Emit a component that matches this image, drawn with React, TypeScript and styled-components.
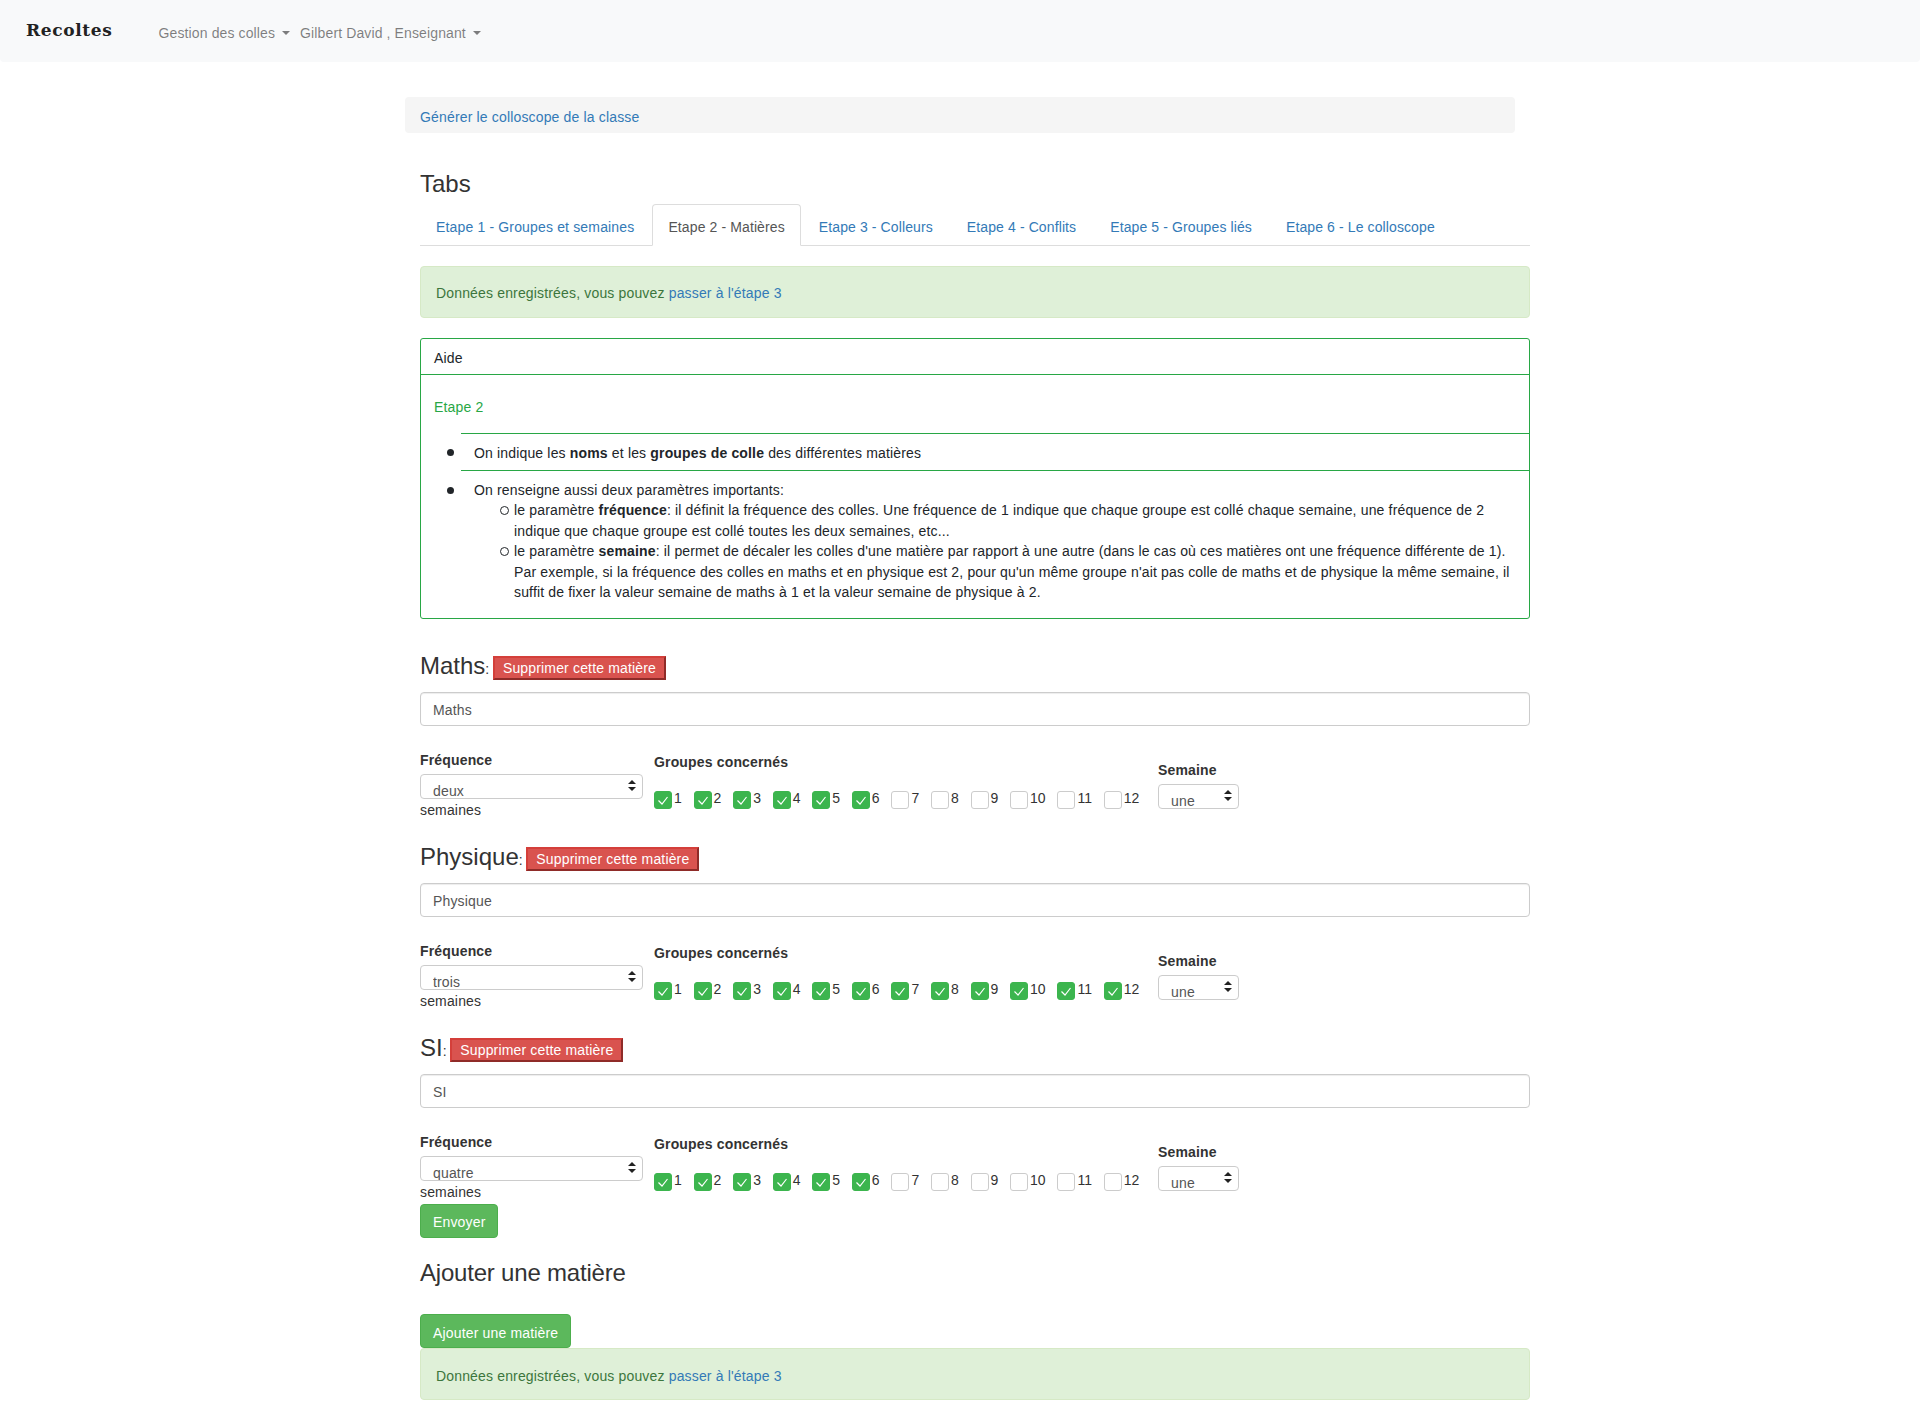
import styled, { createGlobalStyle } from "styled-components";

const GlobalStyle = createGlobalStyle`
  html, body {
    margin: 0;
    padding: 0;
    background: #fff;
  }
  body {
    font-family: "Liberation Sans", Arial, sans-serif;
    font-size: 14px;
    line-height: 20px;
    letter-spacing: 0.16px;
    color: #333;
  }
  * {
    box-sizing: border-box;
  }
`;

const Navbar = styled.nav`
  display: flex;
  align-items: center;
  height: 62px;
  padding: 0 26px;
  background: #f8f9fa;
  border-radius: 0 0 4px 4px;
`;

const Brand = styled.a`
  font-family: "DejaVu Serif", serif;
  font-weight: 700;
  font-size: 17px;
  letter-spacing: 0.65px;
  color: #222;
  margin-right: 46px;
  margin-top: -2px;
`;

const NavLink = styled.a`
  display: flex;
  align-items: center;
  color: rgba(0, 0, 0, 0.5);
  letter-spacing: 0.12px;
  margin-right: 10px;
  margin-top: 4px;
  &::after {
    content: "";
    margin-left: 7px;
    border-top: 4px solid rgba(0, 0, 0, 0.5);
    border-left: 4px solid transparent;
    border-right: 4px solid transparent;
  }
`;

const Page = styled.main`
  width: 1140px;
  margin: 0 auto;
  padding: 35px 0 0 15px;
`;

const Breadcrumb = styled.div`
  width: 1110px;
  height: 36px;
  padding: 10px 15px 6px;
  background: #f5f5f5;
  border-radius: 4px;
`;

const Link = styled.a`
  color: #337ab7;
`;

const Content = styled.div`
  width: 1110px;
  margin-left: 15px;
`;

const Heading = styled.h3`
  margin: 0;
  font-size: 24px;
  line-height: 26px;
  font-weight: 500;
  letter-spacing: 0;
  color: #333;
`;

const TabsHeading = styled(Heading)`
  margin: 38px 0 7px;
`;

const Tabs = styled.ul`
  display: flex;
  height: 42px;
  margin: 0 0 20px;
  padding: 0;
  list-style: none;
  border-bottom: 1px solid #ddd;
`;

const Tab = styled.li<{ $active?: boolean }>`
  height: 42px;
  margin-right: 2px;
  padding: 12px 15px 8px;
  border: 1px solid ${(p) => (p.$active ? "#ddd" : "transparent")};
  border-bottom-color: ${(p) => (p.$active ? "#fff" : "transparent")};
  border-radius: 4px 4px 0 0;
  background: ${(p) => (p.$active ? "#fff" : "transparent")};
  color: ${(p) => (p.$active ? "#555" : "#337ab7")};
  letter-spacing: 0.11px;
  &:first-child {
    letter-spacing: 0.16px;
  }
`;

const Alert = styled.div`
  height: 52px;
  padding: 16px 15px 14px;
  background: #dff0d8;
  border: 1px solid #d6e9c6;
  border-radius: 4px;
  color: #3c763d;
`;

const AlertTop = styled(Alert)`
  margin-bottom: 20px;
`;

const AlertBottom = styled(Alert)`
  margin-bottom: 20px;
  padding: 17px 15px 13px;
`;

const HelpCard = styled.section`
  margin-bottom: 34px;
  border: 1px solid #28a745;
  border-radius: 3px;
`;

const HelpHeader = styled.div`
  padding: 9px 13px 6px;
  height: 36px;
  border-bottom: 1px solid #28a745;
  color: #212529;
`;

const HelpBody = styled.div`
  padding: 22px 0 15px 13px;
  color: #212529;
`;

const HelpTitle = styled.p`
  margin: 0 0 16px;
  color: #28a745;
`;

const HelpList = styled.ul`
  margin: 0;
  padding: 0 0 0 27px;
  list-style: none;
`;

const HelpItem = styled.li<{ $ruled?: boolean }>`
  position: relative;
  padding: ${(p) => (p.$ruled ? "9px 13px 7px" : "9px 13px 0")};
  border-top: ${(p) => (p.$ruled ? "1px solid #28a745" : "0")};
  border-bottom: ${(p) => (p.$ruled ? "1px solid #28a745" : "0")};
  &::before {
    content: "";
    position: absolute;
    left: -14px;
    top: ${(p) => (p.$ruled ? "15px" : "16px")};
    width: 7px;
    height: 7px;
    border-radius: 50%;
    background: #212529;
  }
`;

const SubList = styled.ul`
  margin: 0;
  padding: 0 0 0 40px;
  list-style: none;
`;

const SubItem = styled.li`
  position: relative;
  line-height: 20.5px;
  &::before {
    content: "";
    position: absolute;
    left: -14px;
    top: 6px;
    width: 7px;
    height: 7px;
    border: 1px solid #212529;
    border-radius: 50%;
  }
`;

const Subjects = styled.div`
  display: flex;
  flex-direction: column;
  gap: 24px;
`;

const SubjectTitle = styled.div`
  display: flex;
  align-items: flex-start;
  height: 28px;
  margin-bottom: 11px;
`;

const Colon = styled.span`
  margin: 6px 3.5px 0 0;
`;

const DeleteButton = styled.button`
  height: 24px;
  margin-top: 3px;
  padding: 0 8px;
  background: #d9534f;
  border: 2px solid;
  border-color: #d43f3a #8f2b28 #8f2b28 #d43f3a;
  color: #fff;
  font: inherit;
  letter-spacing: inherit;
  cursor: pointer;
`;

const NameInput = styled.input`
  display: block;
  width: 100%;
  height: 34px;
  margin-bottom: 24px;
  padding: 7px 12px 5px;
  border: 1px solid #ccc;
  border-radius: 4px;
  box-shadow: inset 0 1px 1px rgba(0, 0, 0, 0.075);
  color: #555;
  font: inherit;
  letter-spacing: inherit;
`;

const Settings = styled.div`
  display: flex;
  align-items: center;
`;

const FrequencyCol = styled.div`
  width: 223px;
  margin-right: 11px;
`;

const GroupsCol = styled.div`
  width: 493px;
  margin-right: 11px;
  padding-bottom: 9px;
`;

const FieldLabel = styled.div`
  font-weight: 700;
`;

const SelectBox = styled.div`
  position: relative;
  height: 25px;
  margin-top: 4px;
  svg {
    position: absolute;
    right: 7px;
    top: 6px;
    pointer-events: none;
  }
`;

const Select = styled.select`
  display: block;
  width: 100%;
  height: 25px;
  padding: 8px 12px 0;
  appearance: none;
  background: #fff;
  border: 1px solid #ccc;
  border-radius: 4px;
  color: #555;
  font: inherit;
  letter-spacing: inherit;
  line-height: 16px;
`;

const WeekCol = styled.div`
  width: 81px;
`;

const Unit = styled.div`
  margin-top: 1px;
`;

const Checks = styled.div`
  display: flex;
  height: 18px;
  margin-top: 19px;
`;

const Check = styled.label`
  display: flex;
  align-items: center;
  height: 18px;
  margin-right: 11.78px;
`;

const CheckBox = styled.span<{ $on: boolean }>`
  display: flex;
  width: 18px;
  height: 18px;
  border-radius: 3px;
  border: 1px solid ${(p) => (p.$on ? "#3cb54e" : "#ccc")};
  background: ${(p) => (p.$on ? "#3cb54e" : "#fff")};
`;

const CheckNumber = styled.span`
  margin: 0 0 4px 2px;
  letter-spacing: 0;
`;

const GreenButton = styled.button`
  display: block;
  height: 34px;
  padding: 8px 12px 4px;
  background: #5cb85c;
  border: 1px solid #4cae4c;
  border-radius: 4px;
  color: #fff;
  font: inherit;
  letter-spacing: inherit;
  cursor: pointer;
`;

const SendButton = styled(GreenButton)`
  margin-top: 2px;
  padding: 7px 12px 5px;
`;

const AddHeading = styled(Heading)`
  margin: 22px 0 28px;
  letter-spacing: -0.2px;
`;

const tabs = [
  "Etape 1 - Groupes et semaines",
  "Etape 2 - Matières",
  "Etape 3 - Colleurs",
  "Etape 4 - Conflits",
  "Etape 5 - Groupes liés",
  "Etape 6 - Le colloscope",
];

const subjects = [
  { name: "Maths", frequency: "deux", groups: 6 },
  { name: "Physique", frequency: "trois", groups: 12 },
  { name: "SI", frequency: "quatre", groups: 6 },
];

const frequencies = ["une", "deux", "trois", "quatre"];
const numbers = [1, 2, 3, 4, 5, 6, 7, 8, 9, 10, 11, 12];

function ChoiceSelect({ value }: { value: string }) {
  return (
    <SelectBox>
      <Select defaultValue={value}>
        {frequencies.map((f) => (
          <option key={f}>{f}</option>
        ))}
      </Select>
      <svg width="8" height="11" viewBox="0 0 8 11" fill="#222">
        <path d="M4 0 L8 4 L0 4 Z" />
        <path d="M0 7 L8 7 L4 11 Z" />
      </svg>
    </SelectBox>
  );
}

function Subject({ name, frequency, groups }: { name: string; frequency: string; groups: number }) {
  return (
    <div>
      <SubjectTitle>
        <Heading>{name}</Heading>
        <Colon>:</Colon>
        <DeleteButton type="button">Supprimer cette matière</DeleteButton>
      </SubjectTitle>
      <NameInput defaultValue={name} />
      <Settings>
        <FrequencyCol>
          <FieldLabel>Fréquence</FieldLabel>
          <ChoiceSelect value={frequency} />
          <Unit>semaines</Unit>
        </FrequencyCol>
        <GroupsCol>
          <FieldLabel>Groupes concernés</FieldLabel>
          <Checks>
            {numbers.map((n) => (
              <Check key={n}>
                <CheckBox $on={n <= groups}>
                  {n <= groups && (
                    <svg width="16" height="16" viewBox="0 0 16 16" fill="none">
                      <path d="M3.5 8.5 L7 12 L12.5 5" stroke="#fff" strokeWidth="1.2" />
                    </svg>
                  )}
                </CheckBox>
                <CheckNumber>{n}</CheckNumber>
              </Check>
            ))}
          </Checks>
        </GroupsCol>
        <WeekCol>
          <FieldLabel>Semaine</FieldLabel>
          <ChoiceSelect value="une" />
        </WeekCol>
      </Settings>
    </div>
  );
}

export default function App() {
  return (
    <>
      <GlobalStyle />
      <Navbar>
        <Brand>Recoltes</Brand>
        <NavLink>Gestion des colles</NavLink>
        <NavLink>Gilbert David , Enseignant</NavLink>
      </Navbar>
      <Page>
        <Breadcrumb>
          <Link>Générer le colloscope de la classe</Link>
        </Breadcrumb>
        <Content>
          <TabsHeading>Tabs</TabsHeading>
          <Tabs>
            {tabs.map((t, i) => (
              <Tab key={t} $active={i === 1}>
                {t}
              </Tab>
            ))}
          </Tabs>
          <AlertTop>
            Données enregistrées, vous pouvez <Link>passer à l'étape 3</Link>
          </AlertTop>
          <HelpCard>
            <HelpHeader>Aide</HelpHeader>
            <HelpBody>
              <HelpTitle>Etape 2</HelpTitle>
              <HelpList>
                <HelpItem $ruled>
                  On indique les <strong>noms</strong> et les <strong>groupes de colle</strong> des
                  différentes matières
                </HelpItem>
                <HelpItem>
                  On renseigne aussi deux paramètres importants:
                  <SubList>
                    <SubItem>
                      le paramètre <strong>fréquence</strong>: il définit la fréquence des colles. Une
                      fréquence de 1 indique que chaque groupe est collé chaque semaine, une fréquence
                      de 2 indique que chaque groupe est collé toutes les deux semaines, etc...
                    </SubItem>
                    <SubItem>
                      le paramètre <strong>semaine</strong>: il permet de décaler les colles d'une
                      matière par rapport à une autre (dans le cas où ces matières ont une fréquence
                      différente de 1). Par exemple, si la fréquence des colles en maths et en physique
                      est 2, pour qu'un même groupe n'ait pas colle de maths et de physique la même
                      semaine, il suffit de fixer la valeur semaine de maths à 1 et la valeur semaine de
                      physique à 2.
                    </SubItem>
                  </SubList>
                </HelpItem>
              </HelpList>
            </HelpBody>
          </HelpCard>
          <Subjects>
            {subjects.map((s) => (
              <Subject key={s.name} {...s} />
            ))}
          </Subjects>
          <SendButton type="button">Envoyer</SendButton>
          <AddHeading>Ajouter une matière</AddHeading>
          <GreenButton type="button">Ajouter une matière</GreenButton>
          <AlertBottom>
            Données enregistrées, vous pouvez <Link>passer à l'étape 3</Link>
          </AlertBottom>
        </Content>
      </Page>
    </>
  );
}
